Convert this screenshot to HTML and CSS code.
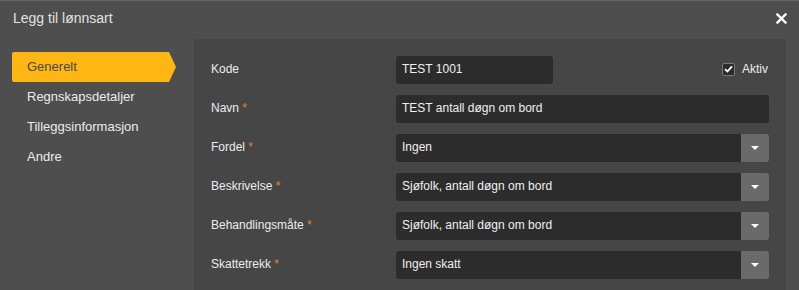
FILE: index.html
```html
<!DOCTYPE html>
<html lang="no">
<head>
<meta charset="utf-8">
<title>Legg til lønnsart</title>
<link rel="stylesheet" href="styles.css">
</head>
<body>
<div class="dialog">
  <header class="titlebar">
    <h1 class="title">Legg til lønnsart</h1>
    <button class="close" aria-label="Lukk">
      <svg width="11" height="11" viewBox="0 0 11 11"><path d="M1.5 1.5L9.5 9.5M9.5 1.5L1.5 9.5" stroke="#fff" stroke-width="2.4" stroke-linecap="square"/></svg>
    </button>
  </header>
  <div class="body">
    <nav class="sidebar">
      <a class="nav-item active">Generelt</a>
      <a class="nav-item">Regnskapsdetaljer</a>
      <a class="nav-item">Tilleggsinformasjon</a>
      <a class="nav-item">Andre</a>
    </nav>
    <section class="panel">
      <div class="row">
        <label class="label">Kode</label>
        <div class="field field-kode">
          <div class="input short">TEST 1001</div>
          <label class="check">
            <span class="box"><svg width="9" height="8" viewBox="0 0 9 8"><path d="M1 4.2L3.4 6.5L8 1.3" fill="none" stroke="#fff" stroke-width="1.8"/></svg></span>
            Aktiv
          </label>
        </div>
      </div>
      <div class="row">
        <label class="label">Navn <span class="req">*</span></label>
        <div class="field"><div class="input">TEST antall døgn om bord</div></div>
      </div>
      <div class="row">
        <label class="label">Fordel <span class="req">*</span></label>
        <div class="field select"><div class="input">Ingen</div><span class="btn"><span class="caret"></span></span></div>
      </div>
      <div class="row">
        <label class="label">Beskrivelse <span class="req">*</span></label>
        <div class="field select"><div class="input">Sjøfolk, antall døgn om bord</div><span class="btn"><span class="caret"></span></span></div>
      </div>
      <div class="row">
        <label class="label">Behandlingsmåte <span class="req">*</span></label>
        <div class="field select"><div class="input">Sjøfolk, antall døgn om bord</div><span class="btn"><span class="caret"></span></span></div>
      </div>
      <div class="row">
        <label class="label">Skattetrekk <span class="req">*</span></label>
        <div class="field select"><div class="input">Ingen skatt</div><span class="btn"><span class="caret"></span></span></div>
      </div>
    </section>
  </div>
</div>
</body>
</html>
```
FILE: styles.css
```css
html, body {
  margin: 0;
  padding: 0;
  height: 100%;
  overflow: hidden;
}
body {
  background: #4e4e4e;
  font-family: "Liberation Sans", Arial, sans-serif;
  font-size: 13px;
  color: #e6e6e6;
}
.dialog {
  border-top: 1px solid #666;
  height: 100%;
  box-sizing: border-box;
  display: flex;
  flex-direction: column;
}
.titlebar {
  height: 38px;
  flex: none;
  display: flex;
  align-items: center;
  justify-content: space-between;
  padding: 0 12px 0 13px;
}
.title {
  margin: 0;
  font-size: 14px;
  font-weight: normal;
  color: #e2e2e2;
  position: relative;
  top: -2px;
}
.close {
  border: 0;
  background: none;
  padding: 0;
  width: 11px;
  height: 11px;
  display: block;
  position: relative;
  top: -2px;
}
.close svg { display: block; }
.body {
  flex: 1;
  min-height: 0;
  display: flex;
  padding-right: 13px;
}
.sidebar {
  width: 194px;
  flex: none;
  padding: 13px 0 0 12px;
  box-sizing: border-box;
  display: flex;
  flex-direction: column;
}
.nav-item {
  height: 30px;
  line-height: 30px;
  padding-left: 15px;
  color: #ececec;
  width: 164px;
  box-sizing: border-box;
}
.nav-item.active {
  background: #fdb614;
  color: #4a4a4a;
  border-radius: 2px 0 0 2px;
  clip-path: polygon(0 0, 157px 0, 164px 50%, 157px 100%, 0 100%);
}
.panel {
  flex: 1;
  background: #464646;
  border-radius: 3px 3px 0 0;
  padding: 17px 17px 0 17px;
  display: flex;
  flex-direction: column;
  gap: 11px;
  overflow: hidden;
  font-size: 12px;
}
.row {
  display: flex;
  align-items: center;
  height: 28px;
  flex: none;
}
.label {
  width: 185px;
  flex: none;
  color: #ececec;
  position: relative;
  top: -1px;
}
.req { color: #e8812c; }
.field {
  flex: 1;
  display: flex;
  height: 28px;
}
.field-kode {
  justify-content: space-between;
  align-items: center;
}
.input {
  flex: 1;
  height: 28px;
  line-height: 27px;
  background: #2c2c2c;
  border-radius: 3px;
  padding-left: 6px;
  color: #f0f0f0;
  box-sizing: border-box;
}
.input.short {
  flex: none;
  width: 157px;
}
.select .input { border-radius: 3px 0 0 3px; }
.btn {
  width: 28px;
  height: 28px;
  background: #6a6a6a;
  border-radius: 0 3px 3px 0;
  display: flex;
  align-items: center;
  justify-content: center;
}
.caret {
  width: 0;
  height: 0;
  border-left: 4px solid transparent;
  border-right: 4px solid transparent;
  border-top: 4px solid #fff;
}
.check {
  display: flex;
  align-items: center;
  gap: 7px;
  color: #ececec;
  position: relative;
  top: -1px;
  margin-right: 1px;
}
.box {
  width: 13px;
  height: 13px;
  box-sizing: border-box;
  border: 1px solid #7a7a7a;
  background: #2c2c2c;
  border-radius: 2px;
  display: flex;
  align-items: center;
  justify-content: center;
}
.box svg { display: block; }
```
